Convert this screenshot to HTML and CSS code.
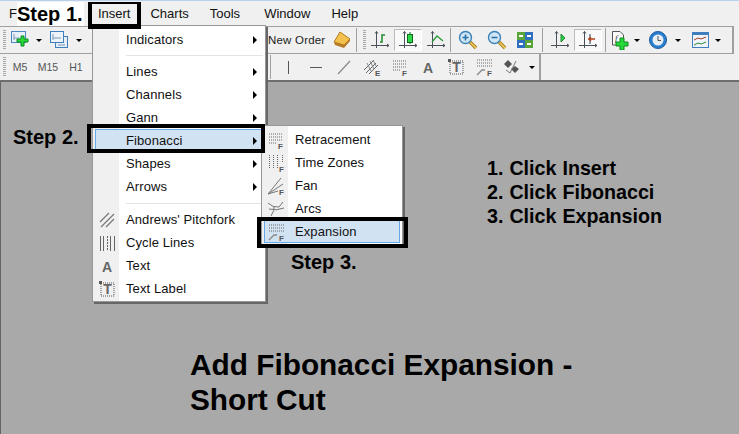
FILE: index.html
```html
<!DOCTYPE html>
<html lang="en">
<head>
    <meta charset="UTF-8">
    <meta name="viewport" content="width=device-width, initial-scale=1.0">
    <title>Add Fibonacci Expansion</title>
    <link rel="stylesheet" href="styles.css">
</head>
<body>

    <svg class="defs" width="0" height="0">
        <defs>
            <symbol id="axes" viewBox="0 0 20 20">
                <path d="M6.5 1.5V18M1 15.5H19M5 3.5L6.5 1.5L8 3.5M17 14L19 15.5L17 17" fill="none" stroke="#4a5058"/>
            </symbol>
            <symbol id="fib-lines" viewBox="0 0 20 20">
                <path d="M3 4H17M3 7H17M3 10H17M3 13H10" fill="none" stroke="#666" stroke-dasharray="1 1"/>
                <text x="12" y="19" class="icon-f">F</text>
            </symbol>
            <symbol id="fib-expansion" viewBox="0 0 20 20">
                <path d="M3 3H18M3 6H18M3 9H18" fill="none" stroke="#666" stroke-dasharray="1 1"/>
                <path d="M3 18L8 13H11" fill="none" stroke="#888" stroke-width="1.3"/>
                <text x="13" y="19" class="icon-f">F</text>
            </symbol>
            <symbol id="letter-a" viewBox="0 0 20 20">
                <text x="10" y="16" class="icon-a">A</text>
            </symbol>
            <symbol id="text-label" viewBox="0 0 20 20">
                <rect x="4" y="4" width="13" height="13" fill="none" stroke="#555" stroke-dasharray="1 1"/>
                <rect x="2" y="2" width="3" height="3" fill="#555"/>
                <text x="10.5" y="15" class="icon-a">T</text>
            </symbol>
        </defs>
    </svg>

    <div class="app">
        <div class="title-line"></div>

        <div class="menubar">
            <span class="menubar-item file">F</span>
            <span class="menubar-item insert">Insert</span>
            <span class="menubar-item charts">Charts</span>
            <span class="menubar-item tools">Tools</span>
            <span class="menubar-item window">Window</span>
            <span class="menubar-item help">Help</span>
        </div>

        <!-- First toolbar -->
        <div class="toolbar toolbar-main">
            <div class="toolbar-left">
                <div class="grip"></div>
                <div class="tool first">
                    <svg width="20" height="20" viewBox="0 0 20 20">
                        <rect x="1.5" y="1.5" width="14" height="11" fill="#e6eef8" stroke="#4a86c0"/>
                        <path d="M4 4V10M4 8H9" stroke="#7a99b8"/>
                        <path d="M11 6H14V9H18V12H14V16H11V12H7V9H11Z" fill="#26d83a" stroke="#0c8a1c"/>
                    </svg>
                </div>
                <div class="drop"></div>
                <div class="tool">
                    <svg width="20" height="20" viewBox="0 0 20 20">
                        <rect x="6.5" y="6.5" width="12" height="11" fill="#e6eef8" stroke="#3f7fbe"/>
                        <rect x="1.5" y="1.5" width="13" height="11" fill="#eef3fa" stroke="#3f7fbe"/>
                        <path d="M4 4V10M4 8H12M9 15H16" stroke="#7a99b8"/>
                    </svg>
                </div>
                <div class="drop"></div>
            </div>
            <span class="new-order">New Order</span>
            <div class="tool">
                <svg width="20" height="20" viewBox="0 0 20 20">
                    <path d="M2 12L8 2L18 9L12 15Z" fill="#f2c14e" stroke="#b07a20"/>
                    <path d="M2 12L3 15L12 18L18 11V9L12 15Z" fill="#b87a24"/>
                </svg>
            </div>
            <div class="sep"></div>
            <div class="grip"></div>
            <div class="tool">
                <svg width="20" height="20"><use href="#axes"/><path d="M10 12H12V5H15" fill="none" stroke="#1f8a2e" stroke-width="1.5"/></svg>
            </div>
            <div class="tool pressed">
                <svg width="20" height="20"><use href="#axes"/><path d="M12 2V14" stroke="#0c6a1c"/><rect x="9.5" y="4.5" width="5" height="8" fill="#2fd84a" stroke="#0c6a1c"/></svg>
            </div>
            <div class="tool">
                <svg width="20" height="20"><use href="#axes"/><path d="M6 12L11 6L17 11" fill="none" stroke="#2a9a3c" stroke-width="1.3"/></svg>
            </div>
            <div class="sep"></div>
            <div class="tool">
                <svg width="20" height="20" viewBox="0 0 20 20">
                    <path d="M12 12L18 18" stroke="#a8801c" stroke-width="3.5"/>
                    <path d="M12.5 12.5L18 18" stroke="#f4d060" stroke-width="1.5"/>
                    <circle cx="7.5" cy="7.5" r="6" fill="#cfe6f6" stroke="#3a82b8" stroke-width="1.4"/>
                    <path d="M4.5 7.5H10.5M7.5 4.5V10.5" stroke="#2a72a8" stroke-width="1.6"/>
                </svg>
            </div>
            <div class="tool zoom-out">
                <svg width="20" height="20" viewBox="0 0 20 20">
                    <path d="M12 12L18 18" stroke="#a8801c" stroke-width="3.5"/>
                    <path d="M12.5 12.5L18 18" stroke="#f4d060" stroke-width="1.5"/>
                    <circle cx="7.5" cy="7.5" r="6" fill="#cfe6f6" stroke="#3a82b8" stroke-width="1.4"/>
                    <path d="M4.5 7.5H10.5" stroke="#2a72a8" stroke-width="1.6"/>
                </svg>
            </div>
            <div class="tool">
                <svg width="20" height="20" viewBox="0 0 20 20">
                    <rect x="2" y="2" width="8" height="8" fill="#5aa53a"/>
                    <rect x="10" y="2" width="8" height="8" fill="#2f6fc0"/>
                    <rect x="2" y="10" width="8" height="8" fill="#2f6fc0"/>
                    <rect x="10" y="10" width="8" height="8" fill="#5aa53a"/>
                    <path d="M4 6H8M12 6H16M4 14H8M12 14H16" stroke="#fff" stroke-width="2"/>
                </svg>
            </div>
            <div class="sep sep-wide"></div>
            <div class="tool">
                <svg width="20" height="20"><use href="#axes"/><path d="M11 4L15 8L11 12Z" fill="#2fcf4a" stroke="#1f8a2e"/></svg>
            </div>
            <div class="tool pressed">
                <svg width="20" height="20"><use href="#axes"/><path d="M12 4V14" stroke="#2a3a5a"/><path d="M10 9H17M13 7L11 9L13 11" fill="none" stroke="#b0401a" stroke-width="1.3"/></svg>
            </div>
            <div class="sep sep-wide"></div>
            <div class="tool narrow">
                <svg width="20" height="20" viewBox="0 0 20 20">
                    <path d="M2.5 1.5H10L13.5 5V15H2.5Z" fill="#fafafa" stroke="#555"/>
                    <text x="5" y="11" class="icon-doc">f</text>
                    <path d="M10 8H14V12H18V16H14V20H10V16H6V12H10Z" fill="#26d83a" stroke="#0c8a1c"/>
                </svg>
            </div>
            <div class="drop"></div>
            <div class="tool narrow clock">
                <svg width="20" height="20" viewBox="0 0 20 20">
                    <circle cx="10" cy="10" r="8.5" fill="#2a7fd0" stroke="#1c5c9e"/>
                    <circle cx="10" cy="10" r="5.5" fill="#e8eef4"/>
                    <path d="M10 6V10.5H13" fill="none" stroke="#555"/>
                </svg>
            </div>
            <div class="drop drop-clock"></div>
            <div class="tool narrow template">
                <svg width="20" height="20" viewBox="0 0 20 20">
                    <rect x="1.5" y="2.5" width="16" height="15" fill="#eef4fa" stroke="#3f7fbe"/>
                    <rect x="1.5" y="2.5" width="16" height="2.5" fill="#3f7fbe"/>
                    <path d="M3 10L7 8L10 9L15 7" fill="none" stroke="#a83a1a"/>
                    <path d="M3 15L7 13L10 14L15 12" fill="none" stroke="#2a8a3a"/>
                </svg>
            </div>
            <div class="drop"></div>
        </div>

        <!-- Second toolbar -->
        <div class="toolbar toolbar-second">
            <div class="toolbar-left second-left">
                <div class="grip"></div>
                <div class="tool timeframe">M5</div>
                <div class="tool timeframe">M15</div>
                <div class="tool timeframe">H1</div>
            </div>
            <div class="sep"></div>
            <div class="tool">
                <svg width="20" height="20"><path d="M10.5 4V17" stroke="#555"/></svg>
            </div>
            <div class="tool">
                <svg width="20" height="20"><path d="M4 10.5H16" stroke="#555"/></svg>
            </div>
            <div class="tool">
                <svg width="20" height="20"><path d="M4 17L16 4" stroke="#888" stroke-width="1.2"/></svg>
            </div>
            <div class="tool">
                <svg width="20" height="20" viewBox="0 0 20 20">
                    <path d="M2 13L12 3M4 16L14 6M7 17L16 8" stroke="#666"/>
                    <path d="M5 6L9 14M8 4L12 12M11 3L14 9" stroke="#888"/>
                    <text x="13" y="19" class="icon-f">E</text>
                </svg>
            </div>
            <div class="tool">
                <svg width="20" height="20"><use href="#fib-lines"/></svg>
            </div>
            <div class="tool">
                <svg width="20" height="20"><use href="#letter-a"/></svg>
            </div>
            <div class="tool">
                <svg width="20" height="20"><use href="#text-label"/></svg>
            </div>
            <div class="tool">
                <svg width="20" height="20"><use href="#fib-expansion"/></svg>
            </div>
            <div class="tool">
                <svg width="20" height="20" viewBox="0 0 20 20">
                    <path d="M6 3L10 7L6 11L2 7Z" fill="#555"/>
                    <path d="M13 9L17 12L13 16L9 12Z" fill="#555"/>
                    <path d="M4 13L8 16L14 4" fill="none" stroke="#777"/>
                </svg>
            </div>
            <div class="drop drop-last"></div>
            <div class="sep sep-end"></div>
        </div>

        <div class="chart">
            <h2 class="step step-two">Step 2.</h2>
            <h2 class="step step-three">Step 3.</h2>
            <ol class="steps-list">
                <li>1. Click Insert</li>
                <li>2. Click Fibonacci</li>
                <li>3. Click Expansion</li>
            </ol>
            <h1 class="headline">Add Fibonacci Expansion -<br>Short Cut</h1>
        </div>

        <!-- Insert menu -->
        <div class="menu menu-insert">
            <div class="menu-row"><span class="menu-gutter"></span><span class="menu-label">Indicators</span><span class="menu-arrow"></span></div>
            <div class="menu-sep"></div>
            <div class="menu-row"><span class="menu-gutter"></span><span class="menu-label">Lines</span><span class="menu-arrow"></span></div>
            <div class="menu-row"><span class="menu-gutter"></span><span class="menu-label">Channels</span><span class="menu-arrow"></span></div>
            <div class="menu-row"><span class="menu-gutter"></span><span class="menu-label">Gann</span><span class="menu-arrow"></span></div>
            <div class="menu-row active"><span class="menu-gutter"></span><span class="menu-label">Fibonacci</span><span class="menu-arrow"></span></div>
            <div class="menu-row"><span class="menu-gutter"></span><span class="menu-label">Shapes</span><span class="menu-arrow"></span></div>
            <div class="menu-row"><span class="menu-gutter"></span><span class="menu-label">Arrows</span><span class="menu-arrow"></span></div>
            <div class="menu-sep menu-sep-tall"></div>
            <div class="menu-row">
                <span class="menu-gutter">
                    <svg width="20" height="20" viewBox="0 0 20 20"><path d="M3 12L12 3M4 17L17 4M9 17L17 9" stroke="#777" stroke-width="1.2"/></svg>
                </span>
                <span class="menu-label">Andrews' Pitchfork</span>
            </div>
            <div class="menu-row">
                <span class="menu-gutter">
                    <svg width="20" height="20" viewBox="0 0 20 20"><path d="M3.5 3V18M6.5 3V18M13.5 3V18M17.5 3V18" stroke="#666"/><path d="M10.5 3V18" stroke="#666" stroke-dasharray="2 1"/></svg>
                </span>
                <span class="menu-label">Cycle Lines</span>
            </div>
            <div class="menu-row">
                <span class="menu-gutter"><svg width="20" height="20"><use href="#letter-a"/></svg></span>
                <span class="menu-label">Text</span>
            </div>
            <div class="menu-row">
                <span class="menu-gutter"><svg width="20" height="20"><use href="#text-label"/></svg></span>
                <span class="menu-label">Text Label</span>
            </div>
        </div>

        <!-- Fibonacci submenu -->
        <div class="menu menu-fib">
            <div class="menu-row">
                <span class="menu-gutter"><svg width="20" height="20"><use href="#fib-lines"/></svg></span>
                <span class="menu-label">Retracement</span>
            </div>
            <div class="menu-row">
                <span class="menu-gutter">
                    <svg width="20" height="20" viewBox="0 0 20 20">
                        <path d="M3.5 2V15M7.5 2V15M11.5 2V15M16.5 2V10" stroke="#666" stroke-dasharray="1 1"/>
                        <text x="13" y="19" class="icon-f">F</text>
                    </svg>
                </span>
                <span class="menu-label">Time Zones</span>
            </div>
            <div class="menu-row">
                <span class="menu-gutter">
                    <svg width="20" height="20" viewBox="0 0 20 20">
                        <path d="M2 18L15 2M2 18L17 8M2 18L12 15" stroke="#777"/>
                        <text x="13" y="19" class="icon-f">F</text>
                    </svg>
                </span>
                <span class="menu-label">Fan</span>
            </div>
            <div class="menu-row">
                <span class="menu-gutter">
                    <svg width="20" height="20" viewBox="0 0 20 20">
                        <path d="M2 4Q7 9 13 8L17 3M5 17Q9 11 8 7M3 10Q10 12 18 9" fill="none" stroke="#777"/>
                    </svg>
                </span>
                <span class="menu-label">Arcs</span>
            </div>
            <div class="menu-row active">
                <span class="menu-gutter"><svg width="20" height="20"><use href="#fib-expansion"/></svg></span>
                <span class="menu-label">Expansion</span>
            </div>
        </div>

        <!-- Black tutorial boxes -->
        <div class="step-one">Step 1.</div>
        <div class="callout callout-insert"></div>
        <div class="callout callout-fibonacci"></div>
        <div class="callout callout-expansion"></div>
    </div>

</body>
</html>
```

FILE: styles.css
```css
body {
    margin: 0;
    font-family: "Liberation Sans", Arial, sans-serif;
    overflow: hidden;
}

.defs {
    position: absolute;
}

.app {
    position: relative;
    width: 739px;
    height: 434px;
    display: flex;
    flex-direction: column;
    background: #f0f0f0;
    overflow: hidden;
}

.title-line {
    height: 1px;
    background: #b9d1ea;
}

.menubar {
    height: 25px;
    display: flex;
    align-items: center;
    font-size: 13px;
    color: #111;
    flex: none;
}

.menubar-item {
    padding-bottom: 1px;
}

.file { margin-left: 9px; }
.insert { margin-left: 81px; }
.charts { margin-left: 20px; }
.tools { margin-left: 21px; }
.window { margin-left: 24px; }
.help { margin-left: 21px; }

.toolbar {
    display: flex;
    align-items: center;
    flex: none;
}

.toolbar-main {
    width: 732px;
    height: 26px;
    border-top: 1px solid #a0a0a0;
    border-bottom: 1px solid #a0a0a0;
    border-right: 2px solid #a0a0a0;
    box-sizing: content-box;
}

.toolbar-second {
    height: 26px;
    border-bottom: 2px solid #6e6e6e;
}

.toolbar-left {
    width: 266px;
    flex: none;
    display: flex;
    align-items: center;
}

.second-left {
    width: 270px;
}

.grip {
    width: 3px;
    height: 20px;
    margin: 0 0 0 3px;
    flex: none;
    background: repeating-linear-gradient(#a8a8a8 0 1px, transparent 1px 2px);
}

.tool {
    width: 28px;
    height: 22px;
    flex: none;
    display: flex;
    align-items: center;
    justify-content: center;
    box-sizing: border-box;
}

.tool.first { width: 27px; }
.tool.narrow { width: 22px; }
.tool.zoom-out { margin-left: 1px; }
.tool.clock { margin-left: 4px; }
.tool.template { margin-left: 6px; }

.tool.pressed {
    background: #f9f9f9;
    border: 1px solid;
    border-color: #bcbcbc #fff #fff #bcbcbc;
}

.timeframe {
    font-size: 10.5px;
    color: #555;
}

.drop {
    width: 12px;
    height: 22px;
    flex: none;
    position: relative;
}

.drop::after {
    content: "";
    position: absolute;
    left: 3px;
    top: 10px;
    border-left: 3px solid transparent;
    border-right: 3px solid transparent;
    border-top: 3px solid #000;
}

.drop-clock { margin-left: 3px; }
.drop-last { margin-right: 1px; }

.sep {
    width: 1px;
    height: 24px;
    flex: none;
    margin: 0 3px 0 0;
    background: #a0a0a0;
}

.sep-wide { margin: 0 3px 0 3px; }
.sep-end { height: 26px; width: 2px; }

.new-order {
    width: 62px;
    flex: none;
    padding-left: 2px;
    box-sizing: border-box;
    font-size: 11.5px;
    color: #222;
    white-space: nowrap;
    letter-spacing: 0.2px;
}

.icon-f {
    font: bold 8px "Liberation Sans", sans-serif;
    fill: #555;
}

.icon-a {
    font: bold 14px "Liberation Sans", sans-serif;
    fill: #666;
    text-anchor: middle;
}

.icon-doc {
    font: italic 9px "Liberation Serif", serif;
    fill: #333;
}

.chart {
    flex: 1;
    position: relative;
    background: #a9a9a9;
    border-left: 1px solid #666;
    color: #000;
}

.step {
    position: absolute;
    margin: 0;
    font-size: 20px;
    line-height: 24px;
}

.step-two { left: 12px; top: 43px; }
.step-three { left: 290px; top: 168px; }

.steps-list {
    position: absolute;
    left: 486px;
    top: 74px;
    margin: 0;
    padding: 0;
    list-style: none;
    font-size: 19.7px;
    line-height: 24px;
    font-weight: bold;
    word-spacing: 0.5px;
}

.headline {
    position: absolute;
    left: 189px;
    top: 265px;
    margin: 0;
    font-size: 29.8px;
    line-height: 35px;
    white-space: nowrap;
}

.menu {
    position: absolute;
    background: linear-gradient(#f0f0f0, #f0f0f0) 0 0 / 26px 100% no-repeat #fff;
    border: 1px solid #979797;
    box-shadow: 2px 2px 0 #666;
    box-sizing: border-box;
    font-size: 13px;
    letter-spacing: 0.1px;
    color: #111;
}

.menu-insert {
    left: 92px;
    top: 25px;
    width: 174px;
    height: 277px;
    padding: 2px;
}

.menu-fib {
    left: 261px;
    top: 125px;
    width: 142px;
    height: 120px;
    padding: 2px;
}

.menu-row {
    position: relative;
    height: 23px;
    display: flex;
    align-items: center;
}

.menu-gutter {
    width: 24px;
    height: 23px;
    flex: none;
    display: flex;
    align-items: center;
    justify-content: center;
}

.menu-label {
    margin-left: 7px;
    white-space: nowrap;
}

.menu-arrow {
    position: absolute;
    right: 6px;
    top: 8px;
    border-top: 4px solid transparent;
    border-bottom: 4px solid transparent;
    border-left: 4px solid #000;
}

.menu-sep {
    height: 9px;
    margin-left: 24px;
    background: linear-gradient(#e4e4e4, #e4e4e4) 7px 4px / 100% 1px no-repeat;
}

.menu-sep-tall {
    height: 10px;
    background-position: 7px 5px;
}

.menu-row.active {
    background: #d1e2f2;
    outline: 1px solid #66a7e8;
    outline-offset: -1px;
}

.step-one {
    position: absolute;
    left: 17px;
    top: 2px;
    width: 67px;
    height: 24px;
    background: #fff;
    font-size: 20px;
    font-weight: bold;
    line-height: 24px;
    white-space: nowrap;
}

.callout {
    position: absolute;
    box-sizing: border-box;
    border: 4px solid #000;
}

.callout-insert {
    left: 88px;
    top: 2px;
    width: 53px;
    height: 27px;
    border-width: 2px 4px 5px;
}

.callout-fibonacci {
    left: 87px;
    top: 124px;
    width: 178px;
    height: 29px;
}

.callout-expansion {
    left: 257px;
    top: 217px;
    width: 151px;
    height: 31px;
}
```
